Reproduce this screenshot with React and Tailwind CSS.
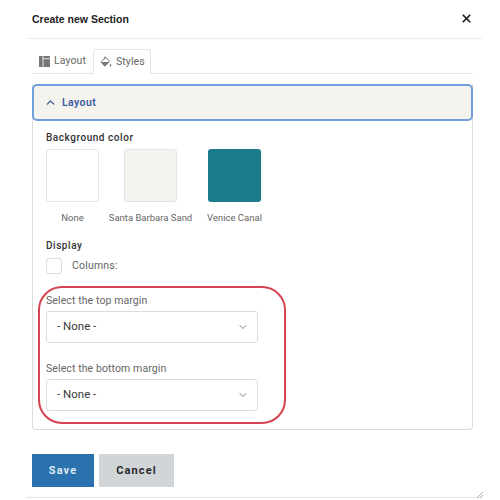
import React from "react";
import { X, ChevronUp, ChevronDown } from "lucide-react";

const plex = "font-['Roboto','Liberation_Sans',sans-serif]";

function Swatch({ label, box }) {
  return (
    <div className="flex flex-col items-center w-[53px]">
      <div className={`w-[53px] h-[53px] rounded-[3px] ${box}`} />
      <div className="mt-[10px] text-[9.5px] leading-[12px] text-[#666] whitespace-nowrap">{label}</div>
    </div>
  );
}

function Select() {
  return (
    <div className="w-[212px] h-[32px] mt-[4px] flex items-center justify-between pl-[10px] pr-[8px] bg-white border border-[#dcdcdc] rounded-[3px] text-[11.5px] text-[#3a3a3a]">
      <span>- None -</span>
      <ChevronDown size={12} strokeWidth={1.5} className="text-[#555]" />
    </div>
  );
}

export default function App() {
  return (
    <div className={`relative w-[500px] h-[500px] bg-white overflow-hidden ${plex}`}>
      <div className="mx-[26px] w-[456px] h-[39px] border-b border-[#ececec] flex items-center justify-between pl-[6px] pr-[6px] pt-[1px]">
        <h1 className="font-['Liberation_Sans',sans-serif] font-bold text-[10.5px] text-[#222]">Create new Section</h1>
        <X size={13} strokeWidth={3.2} className="text-[#222] mb-[3px] mr-[3px]" />
      </div>

      <div className="ml-[32px] w-[441px] h-[24px] mt-[10px] border-b border-[#e4e4e4] flex items-stretch text-[10.5px] text-[#666] tracking-[0.1px] box-content">
        <div className="flex items-center gap-[4px] pl-[7px] w-[61px]">
          <svg width="11" height="11" viewBox="0 0 11 11" fill="#777">
            <rect x="0" y="0" width="3.6" height="11" />
            <rect x="4.4" y="0" width="6.6" height="2.4" />
            <rect x="4.4" y="3.2" width="6.6" height="7.8" />
          </svg>
          <span>Layout</span>
        </div>
        <div className="flex items-center gap-[4px] pl-[6px] w-[58px] h-[25px] border border-b-0 border-[#e4e4e4] rounded-t-[2px] bg-white">
          <svg width="12" height="12" viewBox="0 0 12 12">
            <path d="M5.500 1.200 1.300 5.400a.8.8 0 0 0 0 1.100l2.900 2.900a.8.800 0 0 0 1.100 0l4.200-4.200Z" fill="none" stroke="#777" strokeWidth="1" />
            <path d="M1 6h8.600L5.300 10a1 1 0 0 1-1.300 0Z" fill="#777" />
            <path d="M5 .5v3" stroke="#777" strokeWidth="1" />
            <path d="M10.500 7.800c-.5.800-.9 1.300-.9 1.800a.9.9 0 0 0 1.800 0c0-.5-.4-1-.9-1.800Z" fill="#777" />
          </svg>
          <span>Styles</span>
        </div>
      </div>

      <div className="relative ml-[32px] mt-[10px] w-[441px] h-[346px] border border-t-0 border-[#dcdcdc] rounded-b-[4px]">
        <div className="-ml-px w-[441px] h-[37px] bg-[#f4f3ee] border-[2.5px] border-[#6f9fdc] rounded-[5px] flex items-center pl-[10px] gap-[5px] text-[#3b5aa0] font-semibold text-[10.5px] tracking-[0.4px]">
          <ChevronUp size={13} strokeWidth={2.5} />
          <span>Layout</span>
        </div>

        <div className="pl-[13px] pt-[11px]">
          <div className="text-[10px] leading-[12px] font-medium text-[#333] tracking-[0.55px]">Background color</div>
          <div className="flex mt-[5px] text-center">
            <Swatch label="None" box="bg-white border border-[#e4e4e4]" />
            <div className="ml-[25px]">
              <Swatch label="Santa Barbara Sand" box="bg-[#f4f3ee] border border-[#e4e4e4]" />
            </div>
            <div className="ml-[31px]">
              <Swatch label="Venice Canal" box="bg-[#1a7c8a]" />
            </div>
          </div>

          <div className="mt-[16px] text-[10px] leading-[12px] font-medium text-[#333] tracking-[0.55px]">Display</div>
          <div className="flex items-center mt-[6px] h-[16px]">
            <div className="w-[16px] h-[16px] bg-white border border-[#dcdcdc] rounded-[3px]" />
            <span className="ml-[10px] text-[10.5px] text-[#666] tracking-[0.2px]">Columns:</span>
          </div>

          <div className="mt-[20px] text-[10.5px] leading-[13px] text-[#666] tracking-[0.1px]">Select the top margin</div>
          <Select />
          <div className="mt-[19px] text-[10.5px] leading-[13px] text-[#666] tracking-[0.1px]">Select the bottom margin</div>
          <Select />
        </div>

        <div className="absolute left-[5px] top-[202px] w-[248px] h-[138px] border-2 border-[#d6434f] rounded-[24px]" />
      </div>

      <div className="flex ml-[32px] mt-[24px] gap-[5px] text-[11px] font-bold tracking-[1.1px]">
        <div className="w-[62px] h-[33px] pt-[1px] flex items-center justify-center bg-[#2a72ae] text-[#dfe9f2]">Save</div>
        <div className="w-[75px] h-[33px] pt-[1px] flex items-center justify-center bg-[#d2d5d8] text-[#26282b]">Cancel</div>
      </div>

      <div className="absolute left-[26px] top-[497px] w-[456px] border-b border-[#e4e4e4]" />
      <svg className="absolute left-[476px] top-[491px]" width="8" height="8" viewBox="0 0 8 8" stroke="#999" strokeWidth="0.8">
        <line x1="1" y1="7" x2="7" y2="1" />
        <line x1="4" y1="7" x2="7" y2="4" />
      </svg>
    </div>
  );
}
